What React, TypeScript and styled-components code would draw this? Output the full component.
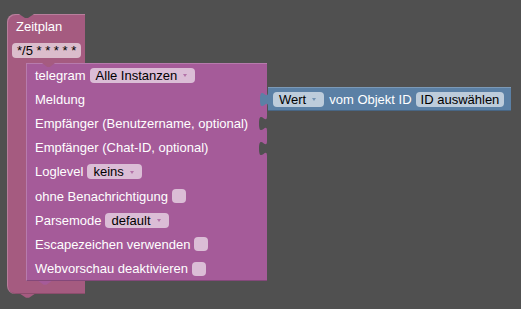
import React from 'react';
import styled, { createGlobalStyle } from 'styled-components';

const BG = '#505050';
const ZEIT = '#a55b80';
const TELE = '#a55b99';
const VAL = '#5b80a5';

const Global = createGlobalStyle`
  html, body { margin: 0; padding: 0; background: ${BG}; }
  body { font-family: "Liberation Sans", Arial, sans-serif; font-size: 13px; }
`;

const Canvas = styled.div`
  width: 521px;
  height: 309px;
  overflow: hidden;
  box-sizing: border-box;
  padding: 14px 0 0 7px;
  background: ${BG};
`;

const CBlock = styled.div`
  width: 78px;
  display: flex;
  flex-direction: column;
`;

const notchClip = 'polygon(0 0, 100% 0, 60% 100%, 40% 100%)';

const CHeader = styled.div`
  position: relative;
  height: 49px;
  box-sizing: border-box;
  background: ${ZEIT};
  border-radius: 8px 0 0 0;
  box-shadow: inset 1px 1px 0 rgba(255, 255, 255, 0.22);
  display: flex;
  flex-direction: column;
  align-items: flex-start;
  &::before {
    content: '';
    position: absolute;
    top: 0;
    left: 12px;
    width: 15px;
    height: 4px;
    background: ${BG};
    clip-path: ${notchClip};
  }
`;

const HeaderLabel = styled.div`
  height: 24px;
  display: flex;
  align-items: center;
  padding-left: 9px;
  color: #fff;
`;

const Statement = styled.div`
  display: flex;
`;

const Spine = styled.div`
  width: 19px;
  flex-shrink: 0;
  background: ${ZEIT};
  box-shadow: inset 1px 0 0 rgba(255, 255, 255, 0.22);
`;

const Arm = styled.div`
  position: relative;
  height: 13px;
  background: ${ZEIT};
  border-radius: 0 0 0 8px;
  box-shadow: inset 1px 0 0 rgba(255, 255, 255, 0.22), inset 0 -1px 0 rgba(0, 0, 0, 0.15);
  &::after {
    content: '';
    position: absolute;
    top: 100%;
    left: 13px;
    width: 15px;
    height: 4px;
    background: ${ZEIT};
    clip-path: ${notchClip};
  }
`;

const StackBlock = styled.div`
  position: relative;
  z-index: 1;
  width: 241px;
  flex-shrink: 0;
  background: ${TELE};
  box-shadow: inset 1px 1px 0 rgba(255, 255, 255, 0.2), inset 0 -1px 0 rgba(0, 0, 0, 0.2);
  display: flex;
  flex-direction: column;
  &::before {
    content: '';
    position: absolute;
    top: 0;
    left: 16px;
    width: 13px;
    height: 4px;
    background: ${ZEIT};
    clip-path: ${notchClip};
  }
  &::after {
    content: '';
    position: absolute;
    top: 100%;
    left: 12px;
    width: 14px;
    height: 4px;
    background: ${TELE};
    clip-path: ${notchClip};
  }
`;

const Row = styled.div`
  position: relative;
  height: 24.2px;
  display: flex;
  align-items: center;
  gap: 4px;
  padding-left: 9px;
  color: #fff;
  white-space: nowrap;
`;

const Field = styled.span<{ $bg: string; $lead?: number }>`
  display: inline-flex;
  align-items: center;
  height: 15px;
  box-sizing: border-box;
  padding: 0 ${(p) => (p.$lead ?? 5)}px 0 ${(p) => (p.$lead ?? 5)}px;
  border-radius: 4px;
  background: ${(p) => p.$bg};
  color: #000;
  white-space: nowrap;
  margin-left: ${(p) => (p.$lead === undefined ? 0 : 0)}px;
`;

const FieldSlot = styled.div`
  margin: 5px 0 0 5px;
`;

const Dropdown = styled.span<{ $bg: string }>`
  display: inline-flex;
  align-items: center;
  gap: 6px;
  height: 15px;
  box-sizing: border-box;
  padding: 0 8px 0 6px;
  border-radius: 4px;
  background: ${(p) => p.$bg};
  color: #000;
`;

const Arrow = styled.span<{ $c: string }>`
  width: 0;
  height: 0;
  border-left: 2.5px solid transparent;
  border-right: 2.5px solid transparent;
  border-top: 3px solid ${(p) => p.$c};
  margin-top: 1px;
`;

const Check = styled.span<{ $bg: string }>`
  width: 14px;
  height: 14px;
  border-radius: 4px;
  background: ${(p) => p.$bg};
`;

const Socket = styled.svg`
  position: absolute;
  top: 0;
  right: 0;
`;

const ValueBlock = styled.div`
  position: relative;
  width: 243px;
  height: 24px;
  flex-shrink: 0;
  box-sizing: border-box;
  margin-left: auto;
  margin-right: -244px;
  padding: 0 6px 0 5px;
  display: flex;
  align-items: center;
  gap: 5px;
  background: ${VAL};
  box-shadow: inset 0 1px 0 rgba(255, 255, 255, 0.2), inset 0 -1px 0 rgba(0, 0, 0, 0.2);
  color: #fff;
`;

const Tab = styled.svg`
  position: absolute;
  top: 0;
  left: -8px;
`;

const TAB_PATH = 'M8,5 C8,15 0,-3 0,12.5 S8,10 8,20 Z';

const PuzzleSocket = () => (
  <Socket width="8" height="21" viewBox="0 0 8 21">
    <path d={TAB_PATH} fill={BG} />
  </Socket>
);

const TELE_FIELD = '#dbbdd6';
const ZEIT_FIELD = '#dbbdcc';
const VAL_FIELD = '#bdccdb';

export default function App() {
  return (
    <>
      <Global />
      <Canvas>
        <CBlock>
          <CHeader>
            <HeaderLabel>Zeitplan</HeaderLabel>
            <FieldSlot>
              <Field $bg={ZEIT_FIELD}>*/5 * * * * *</Field>
            </FieldSlot>
          </CHeader>
          <Statement>
            <Spine />
            <StackBlock>
              <Row>
                telegram
                <Dropdown $bg={TELE_FIELD}>
                  Alle Instanzen
                  <Arrow $c="rgba(165,91,153,0.75)" />
                </Dropdown>
              </Row>
              <Row>
                Meldung
                <ValueBlock>
                  <Tab width="8" height="21" viewBox="0 0 8 21">
                    <path d={TAB_PATH} fill={VAL} />
                  </Tab>
                  <Dropdown $bg={VAL_FIELD}>
                    Wert
                    <Arrow $c="rgba(91,128,165,0.75)" />
                  </Dropdown>
                  <span style={{ marginRight: -1 }}>vom Objekt ID</span>
                  <Field $bg={VAL_FIELD}>ID auswählen</Field>
                </ValueBlock>
              </Row>
              <Row>
                Empfänger (Benutzername, optional)
                <PuzzleSocket />
              </Row>
              <Row>
                Empfänger (Chat-ID, optional)
                <PuzzleSocket />
              </Row>
              <Row>
                Loglevel
                <Dropdown $bg={TELE_FIELD}>
                  keins
                  <Arrow $c="rgba(165,91,153,0.75)" />
                </Dropdown>
              </Row>
              <Row>
                ohne Benachrichtigung
                <Check $bg={TELE_FIELD} />
              </Row>
              <Row>
                Parsemode
                <Dropdown $bg={TELE_FIELD}>
                  default
                  <Arrow $c="rgba(165,91,153,0.75)" />
                </Dropdown>
              </Row>
              <Row>
                Escapezeichen verwenden
                <Check $bg={TELE_FIELD} />
              </Row>
              <Row>
                Webvorschau deaktivieren
                <Check $bg={TELE_FIELD} />
              </Row>
            </StackBlock>
          </Statement>
          <Arm />
        </CBlock>
      </Canvas>
    </>
  );
}
